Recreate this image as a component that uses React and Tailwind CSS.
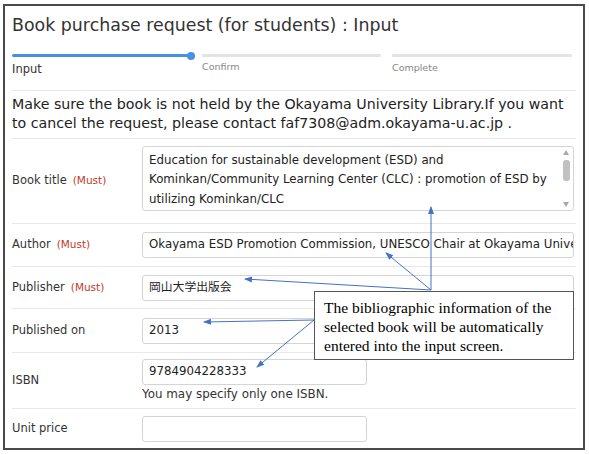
import React from 'react';

const ui = { fontFamily: '"DejaVu Sans", "Noto Sans CJK JP", sans-serif' };

function Must() {
  return <span className="ml-[6px] text-[10.5px] text-[#c0392b]">(Must)</span>;
}

function Row({ label, must, children, className }) {
  return (
    <div className={`flex items-center border-t border-[#e8e8e8] ${className}`}>
      <div className="w-[130px] shrink-0 text-[11.5px] text-[#333]">
        {label}
        {must && <Must />}
      </div>
      <div className="flex-1">{children}</div>
    </div>
  );
}

function Field({ value, wide }) {
  return (
    <div
      className={`flex h-[26px] items-center rounded-[3px] border border-[#d4d4d4] px-[6px] text-[11.8px] text-[#222] whitespace-nowrap overflow-hidden ${
        wide ? 'w-[432px]' : 'w-[225px]'
      }`}
    >
      {value}
    </div>
  );
}

export default function App() {
  return (
    <div className="relative h-[455px] w-[589px] bg-white pl-[3px] pt-[4px]" style={ui}>
      <div className="h-[446px] w-[582px] border-2 border-[#4a4a4a] bg-white pl-[7px] pr-[7px]">
        <h1 className="pt-[8px] text-[17.4px] leading-[22px] text-[#333]">
          Book purchase request (for students) : Input
        </h1>

        {/* steps */}
        <div className="mt-[18px] flex gap-[11px] pr-[4px]">
          <div className="w-[179px]">
            <div className="relative h-[3px] rounded-full bg-[#4a90e2]">
              <span className="absolute -right-[4px] -top-[2.5px] h-[8px] w-[8px] rounded-full bg-[#4a90e2]" />
            </div>
            <div className="mt-[5px] text-[11.5px] leading-[14px] text-[#333]">Input</div>
          </div>
          <div className="w-[179px]">
            <div className="h-[3px] rounded-full bg-[#e3e3e3]" />
            <div className="mt-[3px] text-[9.5px] leading-[14px] text-[#888]">Confirm</div>
          </div>
          <div className="w-[180px]">
            <div className="h-[3px] rounded-full bg-[#e3e3e3]" />
            <div className="mt-[4px] text-[9.5px] leading-[14px] text-[#888]">Complete</div>
          </div>
        </div>

        <div className="mt-[14px] h-[48px] border-t border-[#e8e8e8] pt-[4px] text-[14.2px] leading-[19px] text-[#222]">
          Make sure the book is not held by the Okayama University Library.If you want to cancel the request, please contact faf7308@adm.okayama-u.ac.jp .
        </div>

        <Row label="Book title" must className="h-[85px]">
          <div className="relative mb-[6px] h-[65px] w-[432px] rounded-[3px] border border-[#d4d4d4] py-[4px] pl-[6px] pr-[20px] text-[11.8px] leading-[19.5px] text-[#222]">
            Education for sustainable development (ESD) and Kominkan/Community Learning Center (CLC) : promotion of ESD by utilizing Kominkan/CLC
            <div className="absolute right-[2px] top-[3px] flex h-[57px] w-[10px] flex-col items-center">
              <span className="h-0 w-0 border-x-[3.5px] border-b-[5px] border-x-transparent border-b-[#a8a8a8]" />
              <span className="mt-[5px] h-[21px] w-[7px] rounded-[3px] bg-[#c1c1c1]" />
              <span className="mt-auto h-0 w-0 border-x-[3.5px] border-t-[5px] border-x-transparent border-t-[#a8a8a8]" />
            </div>
          </div>
        </Row>

        <Row label="Author" must className="h-[43px]">
          <Field wide value="Okayama ESD Promotion Commission, UNESCO Chair at Okayama University" />
        </Row>

        <Row label="Publisher" must className="h-[42px]">
          <Field wide value="岡山大学出版会" />
        </Row>

        <Row label="Published on" className="h-[44px]">
          <Field value="2013" />
        </Row>

        <Row label="ISBN" className="h-[56px]">
          <Field value="9784904228333" />
          <div className="mt-[2px] text-[11.9px] leading-[15px] text-[#333]">You may specify only one ISBN.</div>
        </Row>

        <Row label="Unit price" className="h-[41px]">
          <Field value="" />
        </Row>
      </div>

      {/* annotation callout */}
      <svg className="pointer-events-none absolute left-0 top-0" width="589" height="455">
        <defs>
          <marker id="ah" markerWidth="8" markerHeight="8" refX="7" refY="4" orient="auto" markerUnits="userSpaceOnUse">
            <path d="M0,1 L8,4 L0,7 Z" fill="#4472c4" />
          </marker>
        </defs>
        <g stroke="#4472c4" strokeWidth="1" fill="none" markerEnd="url(#ah)">
          <line x1="431" y1="290" x2="431" y2="207" />
          <line x1="431" y1="290" x2="386" y2="253" />
          <line x1="431" y1="290" x2="245" y2="279" />
          <line x1="314" y1="320" x2="204" y2="322" />
          <line x1="314" y1="320" x2="257" y2="367" />
        </g>
      </svg>
      <div
        className="absolute left-[314px] top-[291px] h-[69px] w-[260px] border border-[#555] bg-white pl-[9px] pt-[6px] text-[15.5px] leading-[19px] text-black"
        style={{ fontFamily: '"Liberation Serif", serif' }}
      >
        The bibliographic information of the selected book will be automatically entered into the input screen.
      </div>
    </div>
  );
}
